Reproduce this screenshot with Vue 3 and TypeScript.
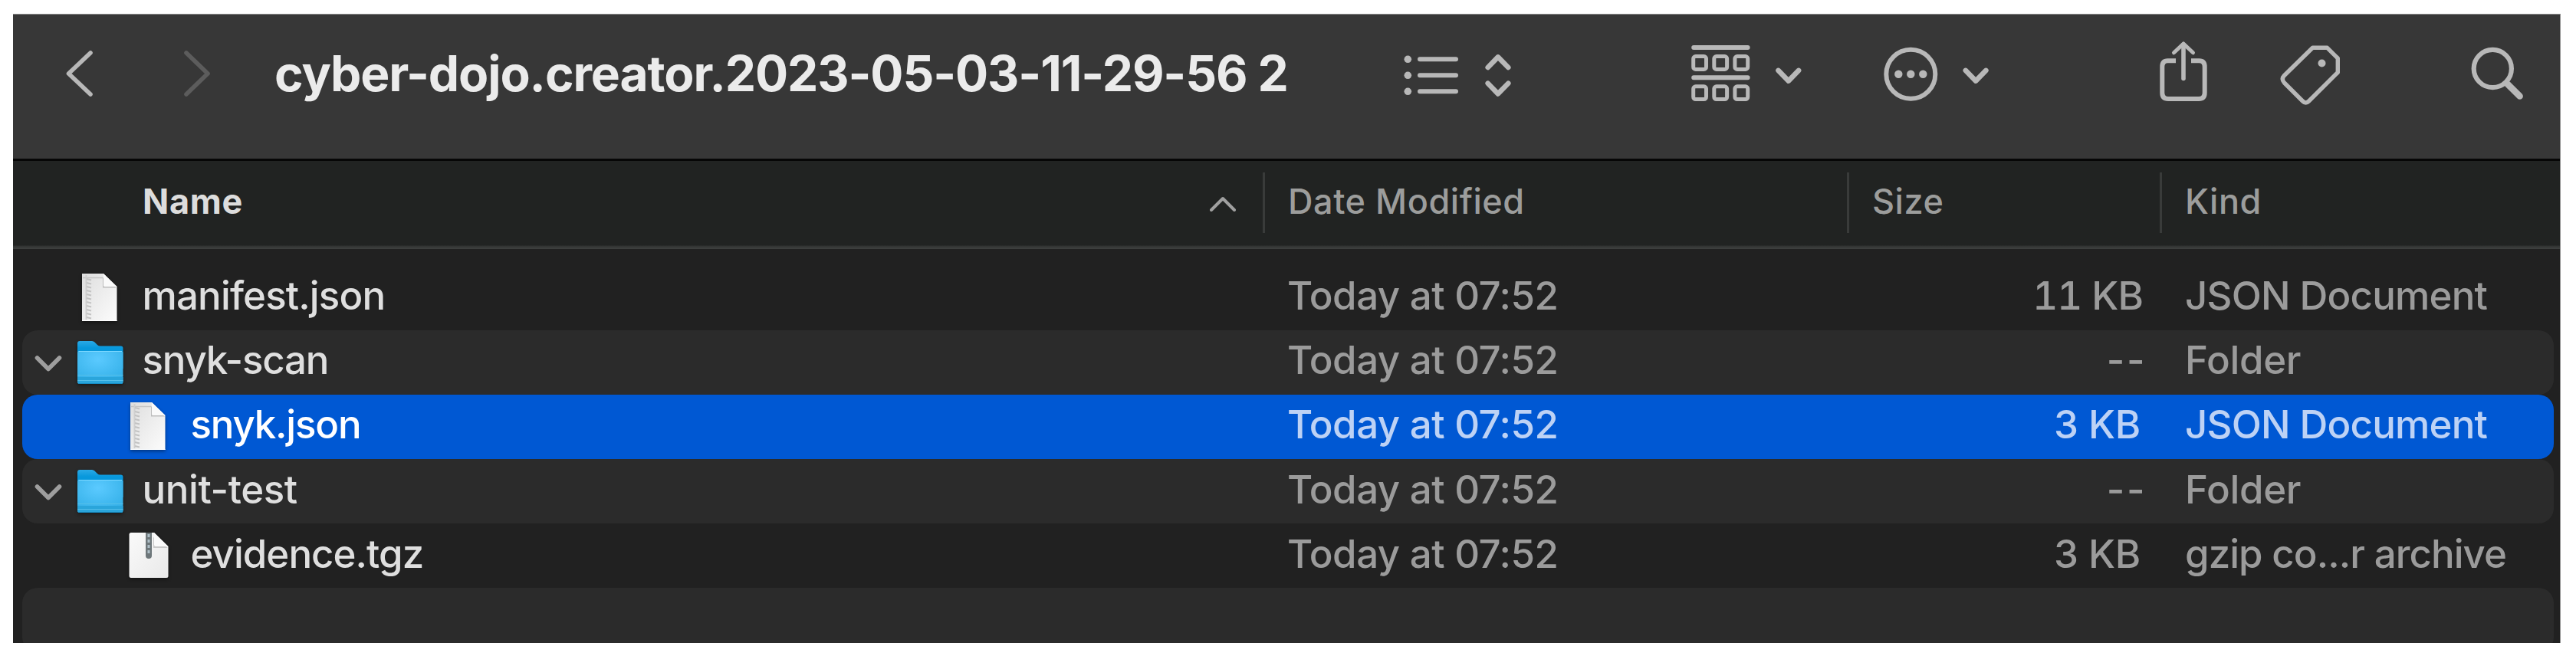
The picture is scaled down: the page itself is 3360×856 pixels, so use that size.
<script setup lang="ts">
type IconKind = 'text' | 'folder' | 'archive'

interface Entry {
  name: string
  icon: IconKind
  nested: boolean
  date: string
  size: string
  kind: string
  selected?: boolean
  nameFit: string
  sizeFit: string
  kindFit: string
}

const entries: Entry[] = [
  { name: 'manifest.json', icon: 'text', nested: false, date: 'Today at 07:52', size: '11 KB', kind: 'JSON Document', nameFit: 'fit-a', sizeFit: 'kb-wide', kindFit: 'fit-b' },
  { name: 'snyk-scan', icon: 'folder', nested: false, date: 'Today at 07:52', size: '--', kind: 'Folder', nameFit: 'fit-d', sizeFit: 'none', kindFit: '' },
  { name: 'snyk.json', icon: 'text', nested: true, date: 'Today at 07:52', size: '3 KB', kind: 'JSON Document', selected: true, nameFit: 'fit-d', sizeFit: 'kb', kindFit: 'fit-b' },
  { name: 'unit-test', icon: 'folder', nested: false, date: 'Today at 07:52', size: '--', kind: 'Folder', nameFit: 'fit-c', sizeFit: 'none', kindFit: '' },
  { name: 'evidence.tgz', icon: 'archive', nested: true, date: 'Today at 07:52', size: '3 KB', kind: 'gzip co...r archive', nameFit: 'fit-e', sizeFit: 'kb', kindFit: 'fit-e' },
]
const teeth = Array.from({ length: 11 }, (_, i) => 17 + i * 5)
</script>

<template>
  <main class="window">
    <header class="toolbar">
      <svg class="ico back" viewBox="80 18 50 156"><path d="M118 69 89.5 96 118 123" stroke-width="5.6" /></svg>
      <svg class="ico forward" viewBox="230 18 50 156"><path d="M243 69 271 96 243 123" stroke-width="5.6" /></svg>
      <h1>cyber-dojo.creator.2023-05-03-11-29-56 2</h1>
      <svg class="ico view" viewBox="1820 18 160 156">
        <g class="solid"><circle cx="1836.3" cy="77.3" r="4.8" /><circle cx="1836.3" cy="98.3" r="4.8" /><circle cx="1836.3" cy="119.3" r="4.8" /></g>
        <path d="M1852 77.3H1899M1852 98.3H1899M1852 119.3H1899" stroke-width="6" />
        <path d="M1940.7 88 1953.9 74.4 1967.3 88M1940.7 108.7 1953.9 122.4 1967.3 108.7" stroke-width="6.6" />
      </svg>
      <svg class="ico group" viewBox="2200 18 160 156">
        <path d="M2209.2 62H2279.6M2209.2 101.3H2279.6" stroke-width="6" />
        <g stroke-width="5">
          <rect v-for="n in 6" :key="n" :x="2208.7 + ((n - 1) % 3) * 27.1" :y="n > 3 ? 112.8 : 73.6" width="16.8" height="16.8" rx="3" />
        </g>
        <path d="M2319.5 91.9 2332.8 105.6 2346.1 91.9" stroke-width="6.6" />
      </svg>
      <svg class="ico more" viewBox="2450 18 150 156">
        <circle cx="2492.3" cy="96.7" r="32" stroke-width="6" />
        <g class="solid"><circle cx="2476.3" cy="96.7" r="5.2" /><circle cx="2492.3" cy="96.7" r="5.2" /><circle cx="2508.3" cy="96.7" r="5.2" /></g>
        <path d="M2563.8 91.9 2577.1 105.6 2590.4 91.9" stroke-width="6.6" />
      </svg>
      <svg class="ico share" viewBox="2810 18 80 156">
        <path class="butt" d="M2838 79.2H2827.5Q2820.3 79.2 2820.3 87V121Q2820.3 129 2828 129H2868Q2875.7 129 2875.7 121V87Q2875.7 79.2 2868.5 79.2H2858" stroke-width="6" />
        <path d="M2848 58V102.5" stroke-width="5.6" />
        <path d="M2835.5 68.8 2848 57 2860.5 68.8" stroke-width="5" />
      </svg>
      <svg class="ico tag" viewBox="2970 18 90 156">
        <path d="M3016.5 62.3H3035.5L3049.3 76V94.5L3011.5 132Q3007.5 136 3003.5 132L2979.5 108Q2975 103 2979.5 98.5Z" stroke-width="5.4" />
        <circle class="solid" cx="3028.5" cy="82.5" r="5" />
      </svg>
      <svg class="ico search" viewBox="3220 18 80 156">
        <circle cx="3251.3" cy="89.5" r="24.6" stroke-width="6.2" />
        <path d="M3270.5 109.5 3286.6 125.5" stroke-width="8.6" />
      </svg>
    </header>

    <div class="columns">
      <div class="col name"><span>Name</span>
        <svg class="sort" viewBox="0 0 34 20"><path d="M2 18 17 3 32 18" /></svg>
      </div>
      <div class="col date">Date Modified</div>
      <div class="col size">Size</div>
      <div class="col kind">Kind</div>
    </div>

    <section class="list">
      <div v-for="e in entries" :key="e.name" class="row" :class="{ selected: e.selected, nested: e.nested }">
        <div class="file">
          <svg v-if="e.icon === 'folder'" class="disclosure" viewBox="0 0 40 24"><path d="M5.5 5 20 19.5 34.5 5" /></svg>
          <svg v-if="e.icon === 'text'" class="glyph" viewBox="0 0 64 84">
            <defs>
              <linearGradient id="sheet" x1="0" y1="0" x2="1" y2="1"><stop offset="0" stop-color="#dedede" /><stop offset="1" stop-color="#fcfcfc" /></linearGradient>
            </defs>
            <path d="M6 10H34L51.5 27V72H6Z" fill="url(#sheet)" />
            <path d="M7 15.5H33" stroke="#c4c4c4" stroke-width="1.5" />
            <path d="M11.5 12V70" stroke="#cfcfcf" stroke-width="2" />
            <path v-for="y in teeth" :key="y" :d="`M12 ${y}l6 1.5`" stroke="#c3c3c3" stroke-width="2" />
            <path d="M33 28.5V15L51 28.5Z" fill="#bdbdbd" />
            <path d="M34 10 51.5 27H35.5Q34 27 34 25.5Z" fill="#fafafa" />
            <path d="M6 71.5H51.5" stroke="#fff" />
          </svg>
          <svg v-else-if="e.icon === 'folder'" class="glyph" viewBox="0 0 64 84">
            <defs>
              <linearGradient id="tab" x1="0" y1="0" x2="0" y2="1"><stop offset="0" stop-color="#2aa9e6" /><stop offset=".25" stop-color="#0898dc" /></linearGradient>
              <radialGradient id="front" cx=".45" cy=".25" r=".8"><stop offset="0" stop-color="#5bcaff" /><stop offset="1" stop-color="#31aee6" /></radialGradient>
            </defs>
            <path d="M0 17Q0 14 3 14H19Q21 14 22.5 15.5L26 19Q27.5 20.5 30 20.5H56.5Q59.5 20.5 59.5 23.5V50H0Z" fill="url(#tab)" />
            <path d="M0 29.5Q0 27 2.5 27H57Q59.5 27 59.5 29.5V67Q59.5 70 56.5 70H3Q0 70 0 67Z" fill="url(#front)" />
            <path d="M0 61H59.5V67Q59.5 70 56.5 70H3Q0 70 0 67Z" fill="#2aa5db" />
            <path d="M0 58.5H59.5M0 65.5H59.5" stroke="#55bfea" />
            <path d="M1 69.5H58.5" stroke="#168dc4" />
            <path d="M1.5 27.5H58" stroke="#7cd8ff" />
          </svg>
          <svg v-else class="glyph" viewBox="0 0 64 84">
            <defs>
              <linearGradient id="bag" x1="0" y1="0" x2="1" y2="1"><stop offset="0" stop-color="#fafafa" /><stop offset="1" stop-color="#e9e9e9" /></linearGradient>
            </defs>
            <path d="M7 12H37L55.5 30.5V68.5Q55.5 71 53 71H7Q4.5 71 4.5 68.5V14.5Q4.5 12 7 12Z" fill="url(#bag)" />
            <path d="M36 32V18L55 32Z" fill="#c9c9c9" />
            <path d="M37 12 55.5 30H39Q37 30 37 28Z" fill="#fbfbfb" />
            <path d="M26 12H34V42Q34 46 30 46Q26 46 26 42Z" fill="#6e777a" />
            <path d="M30 14V42" stroke="#aebfc7" stroke-width="3" stroke-dasharray="4 3" />
          </svg>
          <span class="label" :class="e.nameFit">{{ e.name }}</span>
        </div>
        <div class="when">{{ e.date }}</div>
        <div class="bytes" :class="e.sizeFit">{{ e.size }}</div>
        <div class="type" :class="e.kindFit">{{ e.kind }}</div>
      </div>
      <div class="row blank"></div>
    </section>
  </main>
</template>

<style>
body { background: #fff; }
</style>

<style scoped>
.window {
  box-sizing: border-box;
  width: 3323px;
  height: 821px;
  margin: 18px 0 0 17px;
  overflow: hidden;
  display: flex;
  flex-direction: column;
  background: #212121;
  border-top: 1px solid #8c8c8c;
  border-right: 1px solid #8c8c8c;
  font-family: Inter, "Liberation Sans", sans-serif;
  white-space: pre;
}
.toolbar {
  flex: none;
  box-sizing: border-box;
  height: 191px;
  padding: 0 39px 34px 63px;
  display: flex;
  align-items: center;
  background: #373737;
  border-bottom: 3px solid #060606;
}
.ico {
  flex: none;
  height: 156px;
  fill: none;
  stroke: #b8b8b8;
  stroke-linecap: round;
  stroke-linejoin: round;
}
.ico .solid { fill: #b8b8b8; stroke: none; }
.ico .butt { stroke-linecap: butt; }
.back { width: 50px; }
.forward { width: 50px; margin-left: 100px; stroke: #5c5c5c; }
h1 {
  flex: none;
  width: 1462px;
  margin: 0 0 0 78px;
  font-size: 64px;
  line-height: 78px;
  font-weight: 700;
  letter-spacing: -1.09px;
  color: #ebebeb;
}
.view { width: 160px; }
.group { width: 160px; margin-left: 220px; }
.more { width: 150px; margin-left: 90px; }
.share { width: 80px; margin-left: 210px; }
.tag { width: 90px; margin-left: 80px; }
.search { width: 80px; margin-left: 160px; }

.columns {
  flex: none;
  box-sizing: border-box;
  height: 115px;
  padding-bottom: 7px;
  display: grid;
  grid-template-columns: 1630px 762px 408px 1fr;
  align-items: center;
  background: linear-gradient(#212322 110px, #303231 111px, #3c3e3d 114px);
  font-size: 45px;
  line-height: 54px;
  font-weight: 500;
  letter-spacing: 0.55px;
  color: #9c9d9c;
}
.col {
  height: 79px;
  box-sizing: border-box;
  padding: 0 0 3px 30px;
  display: flex;
  align-items: center;
  border-left: 3px solid #393b3a;
}
.col.name {
  padding: 0 35px 3px 169px;
  justify-content: space-between;
  border-left: 0;
  font-weight: 700;
  letter-spacing: 0.7px;
  color: #dddddd;
}
.sort { width: 34px; height: 20px; margin-top: 7px; fill: none; stroke: #a0a0a0; stroke-width: 4; stroke-linecap: round; stroke-linejoin: round; }

.list {
  flex: 1;
  padding: 21.6px 8px 0 12px;
  font-size: 51px;
  line-height: 62px;
  font-weight: 450;
}
.row {
  box-sizing: border-box;
  height: 84.15px;
  display: grid;
  grid-template-columns: 1650px 762px 355px 54px 1fr;
  align-items: center;
  border-radius: 20px;
  color: #9b9b9b;
}
.row:nth-child(even) { background: #2b2b2b; }
.row.selected { background: #0058d3; color: #bdd2f5; }
.file { height: 84px; display: flex; align-items: center; padding-left: 72px; position: relative; color: #dfdfdf; }
.nested .file { padding-left: 135px; }
.selected .file { color: #fff; }
.disclosure { position: absolute; left: 14px; top: 31px; width: 40px; height: 24px; fill: none; stroke: #9e9e9e; stroke-width: 5.6; stroke-linecap: round; stroke-linejoin: round; }
.glyph { flex: none; width: 64px; height: 84px; filter: drop-shadow(0 2px 2px rgba(0, 0, 0, 0.4)); }
.label { margin-left: 20.5px; padding-bottom: 5px; }
.when, .bytes, .type { padding-bottom: 5px; }
.when { letter-spacing: -0.5px; }
.bytes { text-align: right; }
.type { grid-column: 5; letter-spacing: -0.3px; }
.fit-a { letter-spacing: -0.85px; }
.fit-b { letter-spacing: -0.8px; }
.fit-c { letter-spacing: -0.4px; }
.fit-d { letter-spacing: -1.2px; }
.fit-e { letter-spacing: -0.95px; }
.kb-wide { font-feature-settings: "tnum"; letter-spacing: -0.9px; margin-right: 1px; }
.kb { padding-right: 4px; letter-spacing: -0.3px; }
.none { letter-spacing: 2.5px; margin-right: -4px; }
</style>
